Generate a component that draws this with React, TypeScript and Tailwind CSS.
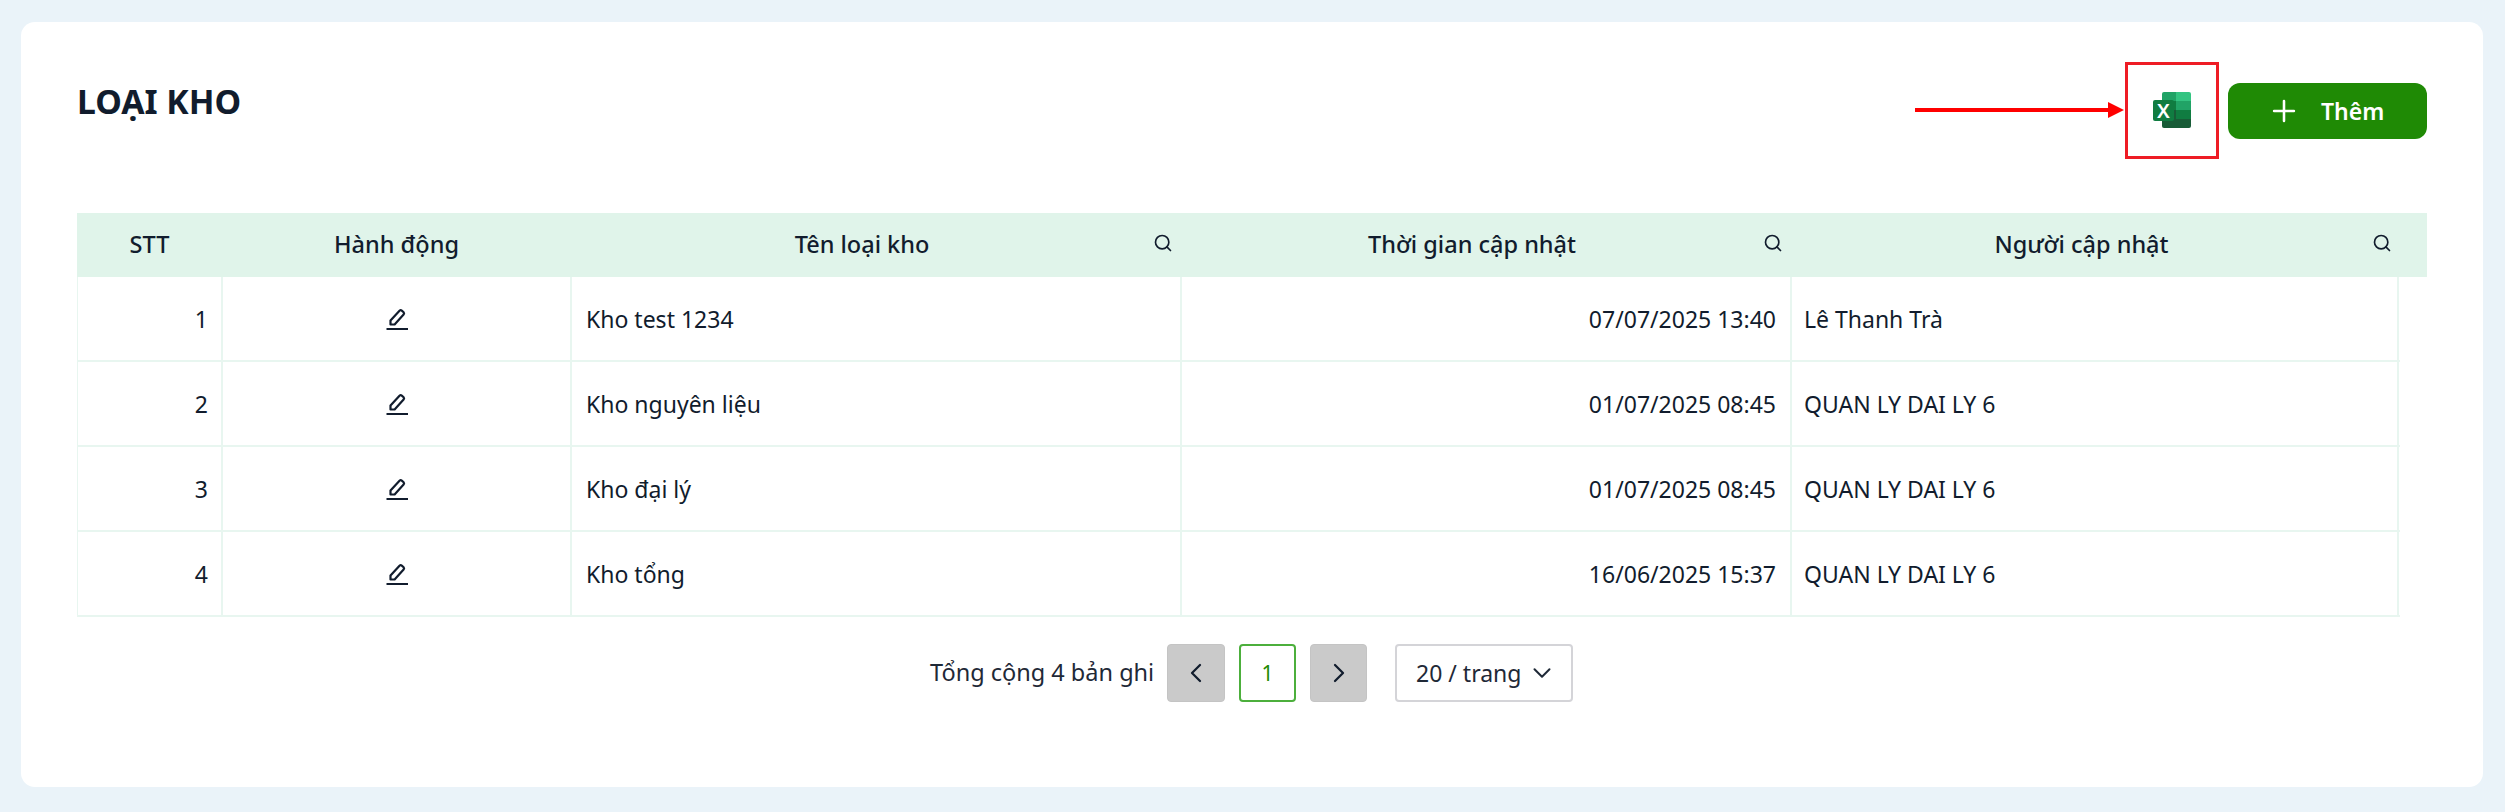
import React from "react";
import { Search, Plus, ChevronLeft, ChevronRight, ChevronDown } from "lucide-react";

const headCols = "grid grid-cols-[145px_349px_610px_610px_609px]";
const bodyCols = "grid grid-cols-[145px_349px_610px_610px_607px]";
const rows = [
  ["1", "Kho test 1234", "07/07/2025 13:40", "Lê Thanh Trà"],
  ["2", "Kho nguyên liệu", "01/07/2025 08:45", "QUAN LY DAI LY 6"],
  ["3", "Kho đại lý", "01/07/2025 08:45", "QUAN LY DAI LY 6"],
  ["4", "Kho tổng", "16/06/2025 15:37", "QUAN LY DAI LY 6"],
];

function Pencil() {
  return (
    <svg width="24" height="24" viewBox="0 0 24 24" fill="none" stroke="#111c2d" strokeWidth="2.2" strokeLinejoin="round">
      <path d="M5.5 17.5 L5.5 13.5 L14.5 3.8 Q15.6 2.8 16.8 3.6 L18.6 5.2 Q19.6 6.4 18.6 7.6 L9.6 17.5 Z" />
      <path d="M1.5 22 H23" strokeWidth="2" />
    </svg>
  );
}

function Excel() {
  return (
    <svg width="38" height="36" viewBox="0 0 38 36">
      <path d="M9 2 Q9 0 11 0 H23 V9 H9 Z" fill="#21a366" />
      <path d="M23 0 H36 Q38 0 38 2 V9 H23 Z" fill="#33c481" />
      <rect x="9" y="9" width="14" height="9" fill="#107c41" />
      <rect x="23" y="9" width="15" height="9" fill="#21a366" />
      <rect x="9" y="18" width="14" height="9" fill="#185c37" />
      <rect x="23" y="18" width="15" height="9" fill="#107c41" />
      <path d="M9 27 H38 V34 Q38 36 36 36 H11 Q9 36 9 34 Z" fill="#185c37" />
      <rect x="0" y="8" width="21" height="21" rx="2" fill="#107c41" />
      <text x="10.5" y="25.5" textAnchor="middle" fill="#ffffff" fontSize="20" fontWeight="600" fontFamily="'Noto Sans', sans-serif">X</text>
    </svg>
  );
}

function HeadCell({ label, search }: { label: string; search?: boolean }) {
  return (
    <div className={`relative flex items-center justify-center font-medium text-[23.5px] ${search ? "pr-[28px]" : ""}`}>
      <span>{label}</span>
      {search && <Search size={20} strokeWidth={2} className="absolute right-[8px] top-[20px] text-[#111c2d]" />}
    </div>
  );
}

export default function App() {
  return (
    <div className="h-[812px] bg-[#eaf3f9] pt-[22px] pr-[22px] pb-[25px] pl-[21px] text-[#111c2d] text-[23px] font-['Noto_Sans',sans-serif] leading-none">
      <div className="relative h-[765px] rounded-[14px] bg-white pt-[61px] pr-[56px] pl-[56px]">
        <div className="flex h-[56px] items-center justify-between">
          <h1 className="m-0 -mt-[18px] text-[33.7px] font-bold text-[#111c2d]">LOẠI KHO</h1>
          <div className="relative flex items-center gap-[9px]">
            <div className="absolute left-[-210px] top-[25px] h-[4px] w-[195px] bg-[#ff0000]" />
            <div className="absolute left-[-17px] top-[19px] h-0 w-0 border-y-[8px] border-l-[16px] border-y-transparent border-l-[#ff0000]" />
            <div className="-my-[21px] -translate-y-px flex h-[97px] w-[94px] items-center justify-center border-[3px] border-[#ee1c25]">
              <Excel />
            </div>
            <button className="flex h-[56px] w-[199px] items-center rounded-[12px] bg-[#1f8a05] pl-[39px] text-[23px] font-semibold text-white">
              <Plus size={34} strokeWidth={1.8} className="mr-[20px]" />
              <span>Thêm</span>
            </button>
          </div>
        </div>

        <div className="mt-[74px]">
          <div className="flex h-[64px] bg-[#e0f4ea]">
            <div className={`${headCols} w-[2323px]`}>
              <HeadCell label="STT" />
              <HeadCell label="Hành động" />
              <HeadCell label="Tên loại kho" search />
              <HeadCell label="Thời gian cập nhật" search />
              <HeadCell label="Người cập nhật" search />
            </div>
          </div>
          <div className="w-[2323px] border-l border-[#e8f6f0]">
            {rows.map((r) => (
              <div key={r[0]} className={`${bodyCols} h-[85px] border-b-2 border-[#e8f6f0]`}>
                <div className="flex items-center justify-end border-r-2 border-[#e8f6f0] pt-[2px] pr-[13px]">{r[0]}</div>
                <div className="flex items-center justify-center border-r-2 border-[#e8f6f0]"><Pencil /></div>
                <div className="flex items-center border-r-2 border-[#e8f6f0] pt-[2px] pl-[14px]">{r[1]}</div>
                <div className="flex items-center justify-end border-r-2 border-[#e8f6f0] pt-[2px] pr-[14px]">{r[2]}</div>
                <div className="flex items-center border-r-2 border-[#e8f6f0] pt-[2px] pl-[12px]">{r[3]}</div>
              </div>
            ))}
          </div>
        </div>

        <div className="mt-[27px] flex h-[58px] items-center pl-[853px]">
          <span className="mr-[15px] w-[222px] whitespace-nowrap text-[23.5px] text-[#1f2937]">Tổng cộng 4 bản ghi</span>
          <div className="flex h-[58px] w-[58px] items-center justify-center rounded-[4px] border border-[#c4c4c4] bg-[#cacaca]"><ChevronLeft size={32} strokeWidth={1.7} /></div>
          <div className="ml-[14px] flex h-[58px] w-[57px] items-center justify-center rounded-[4px] border-2 border-[#4caf3c] text-[#1f8a05] text-[21px]">1</div>
          <div className="ml-[14px] flex h-[58px] w-[57px] items-center justify-center rounded-[4px] border border-[#c4c4c4] bg-[#cacaca]"><ChevronRight size={32} strokeWidth={1.7} /></div>
          <div className="ml-[28px] flex h-[58px] w-[178px] items-center rounded-[4px] border-2 border-[#d4d4d8] pl-[19px] text-[#1f2937]">
            <span className="whitespace-nowrap">20 / trang</span>
            <ChevronDown size={30} strokeWidth={1.6} className="ml-[6px]" />
          </div>
        </div>
      </div>
    </div>
  );
}
